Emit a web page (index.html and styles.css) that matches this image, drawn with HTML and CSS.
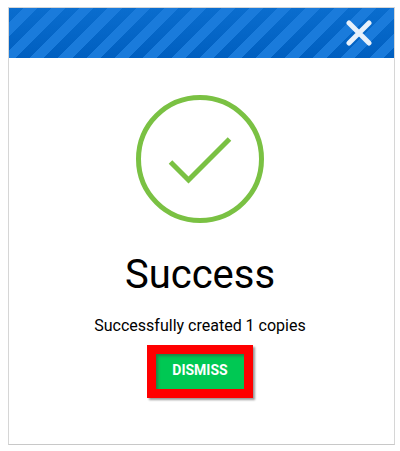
FILE: index.html
```html
<!DOCTYPE html>
<html lang="en">
<head>
<meta charset="utf-8">
<meta name="viewport" content="width=device-width, initial-scale=1">
<title>Success</title>
<link rel="stylesheet" href="styles.css">
</head>
<body>
<section class="dialog" role="dialog" aria-labelledby="dialog-title">
  <header class="dialog-header">
    <button class="close" type="button" aria-label="Close">
      <svg width="26" height="26" viewBox="0 0 26 26" aria-hidden="true">
        <path d="M3 3L23 23M23 3L3 23"/>
      </svg>
    </button>
  </header>
  <div class="dialog-body">
    <svg class="check" width="128" height="128" viewBox="0 0 128 128" aria-hidden="true">
      <circle cx="64" cy="64" r="61.5"/>
      <path d="M34.5 67L52.5 85L93.5 44"/>
    </svg>
    <h1 class="title" id="dialog-title">Success</h1>
    <p class="message">Successfully created 1 copies</p>
    <button class="dismiss" type="button">DISMISS</button>
  </div>
</section>
</body>
</html>
```
FILE: styles.css
```css
* {
  box-sizing: border-box;
}

body {
  margin: 0;
  padding: 7px 5px 6px 8px;
  background: #fff;
  color: #000;
  font-family: Roboto, "Liberation Sans", sans-serif;
}

.dialog {
  border: 1px solid #d6d6d6;
  border-bottom-color: #c8c8c8;
}

.dialog-header {
  display: flex;
  justify-content: flex-end;
  align-items: center;
  height: 50px;
  padding-right: 22px;
  background:
    repeating-linear-gradient(135deg, transparent 0 10px, #1a7bdb 10px 20px),
    linear-gradient(#0a6dce, #005fc0);
}

.close {
  display: flex;
  padding: 0;
  border: 0;
  background: none;
  cursor: pointer;
}

.close path {
  fill: none;
  stroke: #e8f1fb;
  stroke-width: 5;
  stroke-linecap: round;
}

.dialog-body {
  display: flex;
  flex-direction: column;
  align-items: center;
  padding: 37px 19px 46px 16px;
}

.check {
  fill: none;
  stroke: #7ac143;
  stroke-width: 5;
}

.title {
  margin: 28px 0 0;
  font-size: 40px;
  font-weight: 400;
  line-height: 48px;
}

.message {
  margin: 16px 0 8px;
  font-size: 16px;
  line-height: 22px;
}

.dismiss {
  height: 53px;
  padding: 0 16px 4px;
  border: 9px solid #f00;
  background: #00c853;
  box-shadow: 2px 2px 2px rgba(0, 0, 0, 0.4), inset 2px 2px 3px rgba(60, 60, 60, 0.5);
  color: #fff;
  font-family: inherit;
  font-size: 14px;
  font-weight: 700;
  line-height: 20px;
  cursor: pointer;
}
```
